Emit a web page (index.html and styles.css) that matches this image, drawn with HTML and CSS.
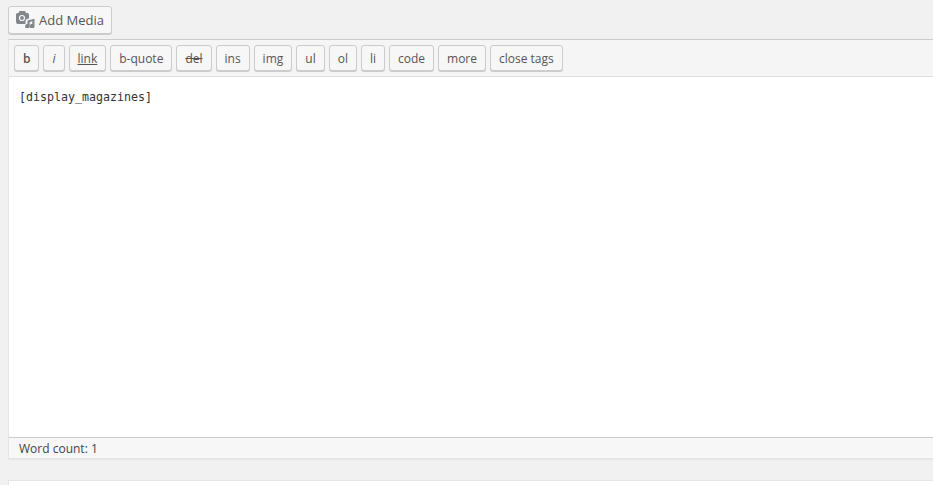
FILE: index.html
```html
<!DOCTYPE html>
<html lang="en">
<head>
<meta charset="utf-8">
<title>Editor</title>
<link rel="stylesheet" href="styles.css">
</head>
<body>
<div class="page">
  <div class="media-row">
    <button class="btn media-btn">
      <svg class="media-icon" width="19" height="17" viewBox="0 0 19 17" aria-hidden="true">
        <path fill="#82878c" d="M3.500 0h5.500l1 2h1.500a1.500 1.500 0 0 1 1.500 1.500V7.500l-2 .5a2 2 0 0 0-1.500 1.900V13H2a2 2 0 0 1-2-2V3.500A1.500 1.500 0 0 1 1.500 2h1z"/>
        <circle cx="6" cy="7" r="3.100" fill="#f7f7f7"/>
        <circle cx="6" cy="7" r="1.900" fill="#82878c"/>
        <path fill="#82878c" d="M11.500 9.500l7-1.800v7.300a2.300 2.300 0 1 1-2.200-2.200V10.300l-2.600.7v4.300a2.300 2.300 0 1 1-2.200-2.200z"/>
      </svg>
      Add Media
    </button>
  </div>
  <div class="editor">
    <div class="toolbar">
      <button class="btn tag bold">b</button>
      <button class="btn tag italic">i</button>
      <button class="btn tag link">link</button>
      <button class="btn tag">b-quote</button>
      <button class="btn tag del">del</button>
      <button class="btn tag">ins</button>
      <button class="btn tag">img</button>
      <button class="btn tag">ul</button>
      <button class="btn tag">ol</button>
      <button class="btn tag">li</button>
      <button class="btn tag">code</button>
      <button class="btn tag">more</button>
      <button class="btn tag">close tags</button>
    </div>
    <div class="content">[display_magazines]</div>
    <div class="status">Word count: 1</div>
  </div>
  <div class="next-box"></div>
</div>
</body>
</html>
```
FILE: styles.css
```css
html, body {
  margin: 0;
  padding: 0;
  height: 485px;
  overflow: hidden;
  background: #f1f1f1;
}
.page {
  width: 1100px;
  padding: 6px 0 0 8px;
  font-family: "Open Sans", sans-serif;
  font-size: 13px;
  color: #444;
}
.media-row {
  display: flex;
  height: 28px;
  margin-bottom: 5px;
}
.btn {
  font-family: inherit;
  color: #555;
  background: #f7f7f7;
  border: 1px solid #ccc;
  border-radius: 3px;
  box-shadow: 0 1px 0 #ccc;
  box-sizing: border-box;
  margin: 0;
  cursor: pointer;
}
.media-btn {
  display: flex;
  align-items: center;
  width: 104px;
  height: 28px;
  padding: 0 0 1px 7px;
  font-size: 13px;
  line-height: 26px;
  white-space: nowrap;
}
.media-icon {
  margin-right: 4px;
  flex: none;
}
.editor {
  border: 1px solid #e5e5e5;
  border-top-color: #ccc;
  border-bottom: 0;
  box-shadow: 0 1px 1px rgba(0, 0, 0, 0.04);
}
.toolbar {
  display: flex;
  gap: 4px;
  height: 37px;
  box-sizing: border-box;
  padding: 5px 5px 0;
  background: #f5f5f5;
  border-bottom: 1px solid #dedede;
}
.tag {
  height: 26px;
  padding: 1px 8px 0;
  font-size: 12px;
  line-height: 24px;
}
.bold { font-weight: 600; }
.italic { font-style: italic; }
.link { text-decoration: underline; }
.del { text-decoration: line-through; }
.content {
  height: 360px;
  box-sizing: border-box;
  padding: 12px 10px;
  background: #fff;
  font-family: "DejaVu Sans Mono", monospace;
  font-size: 11.63px;
  line-height: 17px;
  color: #333;
}
.status {
  height: 22px;
  box-sizing: border-box;
  padding-left: 10px;
  background: #f7f7f7;
  border-top: 1px solid #ccc;
  border-bottom: 1px solid #e5e5e5;
  font-size: 12px;
  line-height: 21px;
  color: #444;
}
.next-box {
  height: 20px;
  margin-top: 21px;
  background: #fff;
  border: 1px solid #e5e5e5;
}
```
